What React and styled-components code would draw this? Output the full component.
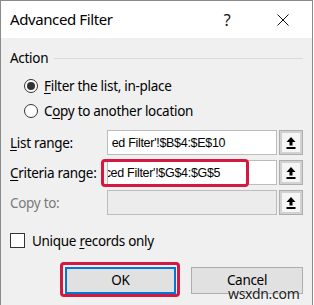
import React from "react";
import styled, { createGlobalStyle } from "styled-components";

const Global = createGlobalStyle`
  html, body { margin: 0; padding: 0; background: #ffffff; }
  body { font-family: "Noto Sans", sans-serif; }
  * { box-sizing: border-box; }
`;

const Page = styled.div`
  position: relative;
  width: 314px;
  height: 305px;
  overflow: hidden;
`;

const Dialog = styled.div`
  width: 313px;
  height: 320px;
  border: 1px solid #8a8a8a;
  border-bottom: none;
  display: flex;
  flex-direction: column;
  background: #f0f0f0;
`;

const TitleBar = styled.div`
  height: 37px;
  background: #ffffff;
  display: flex;
  align-items: center;
  padding-left: 9px;
  font-size: 15px;
  letter-spacing: -0.4px;
  color: #000;
`;

const Title = styled.div`
  flex: 1;
  margin-top: -1px;
`;

const TitleBtn = styled.div`
  width: ${(p) => p.$w}px;
  display: flex;
  align-items: center;
  justify-content: center;
  font-size: 16px;
  color: #111;
`;

const Body = styled.div`
  flex: 1;
  display: flex;
  flex-direction: column;
  padding: 0 9px 0 9px;
  font-size: 13.5px;
  letter-spacing: -0.3px;
  color: #000;
`;

const Legend = styled.div`
  margin-top: 10px;
  height: 20px;
  display: flex;
  align-items: center;
`;

const LegendLine = styled.div`
  flex: 1;
  height: 1px;
  background: #dadada;
  margin: 0 0 0 6px;
`;

const OptRow = styled.label`
  height: 25px;
  display: flex;
  align-items: center;
  gap: 6px;
  padding-left: 14px;
`;

const Radio = styled.span`
  width: 14px;
  height: 14px;
  border-radius: 50%;
  border: 1px solid #333;
  background: #fff;
  display: flex;
  align-items: center;
  justify-content: center;
  &::after {
    content: "";
    width: 8px;
    height: 8px;
    border-radius: 50%;
    background: ${(p) => (p.$on ? "#333" : "transparent")};
  }
`;

const U = styled.span`
  text-decoration: underline;
  text-underline-offset: 2px;
  text-decoration-thickness: 1px;
`;

const Form = styled.div`
  margin-top: 7px;
  display: flex;
  flex-direction: column;
  gap: 5px;
`;

const FieldRow = styled.div`
  height: 25px;
  display: flex;
  align-items: center;
`;

const Label = styled.div`
  width: 97px;
  white-space: nowrap;
  color: ${(p) => (p.$disabled ? "#7a7a7a" : "#000")};
`;

const InputWrap = styled.div`
  position: relative;
  width: 171px;
  height: 25px;
`;

const Input = styled.div`
  width: 100%;
  height: 100%;
  border: 1px solid #bcbcbc;
  background: ${(p) => (p.$disabled ? "#ececec" : "#ffffff")};
  overflow: hidden;
  white-space: nowrap;
  display: flex;
  align-items: center;
  padding-left: ${(p) => p.$pad}px;
  font-family: "Liberation Sans", Arial, sans-serif;
  font-size: 12.5px;
  letter-spacing: -0.3px;
`;

const Highlight = styled.div`
  position: absolute;
  border: 3px solid #d4183f;
  border-radius: 4px;
  pointer-events: none;
`;

const PickBtn = styled.div`
  margin-left: 2px;
  width: 24px;
  height: 25px;
  border: 1px solid #adadad;
  box-shadow: inset 0 0 0 2px #d2d2d2;
  background: #f5f5f5;
  display: flex;
  align-items: center;
  justify-content: center;
`;

const CheckRow = styled.label`
  margin-top: 13px;
  height: 25px;
  display: flex;
  align-items: center;
  gap: 7px;
`;

const CheckBox = styled.span`
  width: 15px;
  height: 15px;
  border: 1px solid #333;
  background: #fff;
`;

const Buttons = styled.div`
  margin-top: 14px;
  display: flex;
  justify-content: flex-end;
  gap: 15px;
`;

const BtnWrap = styled.div`
  position: relative;
`;

const Button = styled.div`
  width: ${(p) => p.$w}px;
  height: 27px;
  background: #e1e1e1;
  border: ${(p) => (p.$default ? "2px solid #0078d7" : "1px solid #adadad")};
  display: flex;
  align-items: center;
  justify-content: center;
  padding-bottom: 1px;
  font-size: 13.5px;
  font-weight: 400;
  color: #000;
`;

const Watermark = styled.div`
  position: absolute;
  left: 228px;
  top: 284px;
  font-family: "Noto Sans", sans-serif;
  font-size: 14px;
  letter-spacing: -0.3px;
  color: #222;
  text-shadow: 0 0 2px #fff;
`;

const UpIcon = () => (
  <svg width="10" height="12" viewBox="0 0 10 12">
    <polygon points="5,0 9.5,5 6.5,5 6.5,8.5 3.5,8.5 3.5,5 0.5,5" fill="#000" />
    <rect x="0.5" y="10" width="9" height="2" fill="#000" />
  </svg>
);

const CloseIcon = () => (
  <svg width="12" height="12" viewBox="0 0 12 12">
    <path d="M0.5 0.5 L11.5 11.5 M11.5 0.5 L0.5 11.5" stroke="#111" strokeWidth="1" fill="none" />
  </svg>
);

export default function App() {
  return (
    <Page>
      <Global />
      <Dialog>
        <TitleBar>
          <Title>Advanced Filter</Title>
          <TitleBtn $w={90}>?</TitleBtn>
          <TitleBtn $w={22}>
            <CloseIcon />
          </TitleBtn>
          <TitleBtn $w={18} />
        </TitleBar>
        <Body>
          <Legend>
            Action
            <LegendLine />
          </Legend>
          <OptRow style={{ marginTop: 5 }}>
            <Radio $on />
            <span>
              <U>F</U>ilter the list, in-place
            </span>
          </OptRow>
          <OptRow>
            <Radio />
            <span>
              C<U>o</U>py to another location
            </span>
          </OptRow>
          <Form>
            <FieldRow>
              <Label>
                <U>L</U>ist range:
              </Label>
              <InputWrap>
                <Input $pad={4}>ed Filter'!$B$4:$E$10</Input>
              </InputWrap>
              <PickBtn>
                <UpIcon />
              </PickBtn>
            </FieldRow>
            <FieldRow>
              <Label>
                <U>C</U>riteria range:
              </Label>
              <InputWrap>
                <Input $pad={0}>
                  <span style={{ marginLeft: -3 }}>ced Filter'!$G$4:$G$5</span>
                </Input>
                <Highlight style={{ left: -6, top: -1, width: 148, height: 28 }} />
              </InputWrap>
              <PickBtn>
                <UpIcon />
              </PickBtn>
            </FieldRow>
            <FieldRow>
              <Label $disabled>Copy to:</Label>
              <InputWrap>
                <Input $disabled $pad={4} />
              </InputWrap>
              <PickBtn>
                <UpIcon />
              </PickBtn>
            </FieldRow>
          </Form>
          <CheckRow>
            <CheckBox />
            <span>
              Unique <U>r</U>ecords only
            </span>
          </CheckRow>
          <Buttons>
            <BtnWrap>
              <Button $w={111} $default>
                OK
              </Button>
              <Highlight style={{ left: -5, top: -5, right: -4, bottom: -3 }} />
            </BtnWrap>
            <Button $w={112}>Cancel</Button>
          </Buttons>
        </Body>
      </Dialog>
      <Watermark>wsxdn.com</Watermark>
    </Page>
  );
}
